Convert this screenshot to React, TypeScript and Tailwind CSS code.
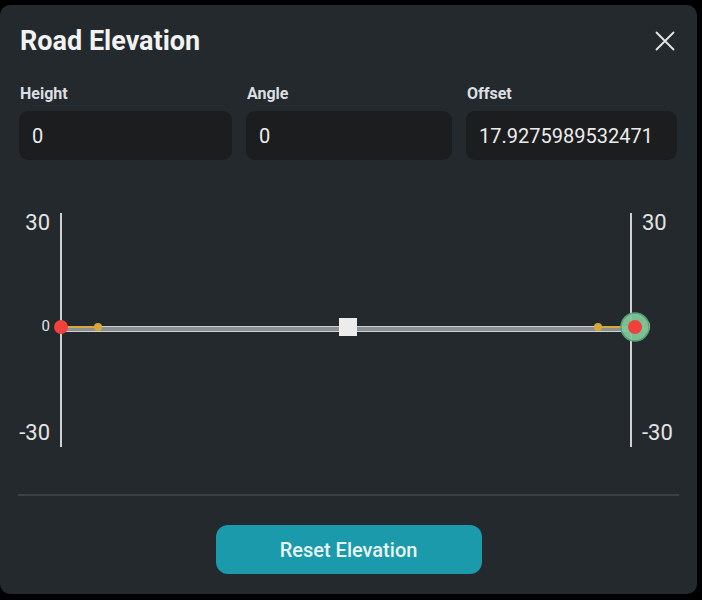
import React from "react";

function CloseIcon() {
  return (
    <svg width="20" height="20" viewBox="0 0 20 20" fill="none">
      <path d="M1.5 1.5 L18.5 18.5 M18.5 1.5 L1.5 18.5" stroke="#e6e6e6" strokeWidth="1.8" strokeLinecap="round" />
    </svg>
  );
}

function Field({ label, value, w }: { label: string; value: string; w: string }) {
  return (
    <div className={`flex flex-col ${w}`}>
      <div className="text-[16px] leading-[20px] font-bold text-[#dcdfe1] pl-[1px]">{label}</div>
      <div className="mt-[7px] h-[49px] rounded-[9px] bg-[#1c1d1e] flex items-center pl-[13px] text-[20px] text-[#ececec]">
        {value}
      </div>
    </div>
  );
}

function Chart() {
  const oy = 165;
  const y = (v: number) => v - oy;
  return (
    <svg width="697" height="325" viewBox="0 0 697 325" className="block">
      <line x1="61" y1={y(213)} x2="61" y2={y(447)} stroke="#d0d0d0" strokeWidth="2" />
      <line x1="631" y1={y(213)} x2="631" y2={y(447)} stroke="#d0d0d0" strokeWidth="2" />
      <text x="50" y={y(230)} textAnchor="end" fontSize="22" fill="#e4e4e4" fontFamily="Roboto, sans-serif">30</text>
      <text x="50" y={y(440)} textAnchor="end" fontSize="22" fill="#e4e4e4" fontFamily="Roboto, sans-serif">-30</text>
      <text x="50" y={y(331)} textAnchor="end" fontSize="15" fill="#e4e4e4" fontFamily="Roboto, sans-serif">0</text>
      <text x="642" y={y(230)} fontSize="22" fill="#e4e4e4" fontFamily="Roboto, sans-serif">30</text>
      <text x="642" y={y(440)} fontSize="22" fill="#e4e4e4" fontFamily="Roboto, sans-serif">-30</text>
      <text x="642" y={y(332)} fontSize="15" fill="#e4e4e4" fontFamily="Roboto, sans-serif">0</text>
      <rect x="61" y={y(326)} width="573" height="6" fill="#8a8f92" />
      <line x1="61" y1={y(326.5)} x2="634" y2={y(326.5)} stroke="#cfcfcf" strokeWidth="1.2" />
      <line x1="61" y1={y(331.5)} x2="634" y2={y(331.5)} stroke="#cfcfcf" strokeWidth="1.2" />
      <line x1="61" y1={y(327)} x2="98" y2={y(327)} stroke="#d8a83a" strokeWidth="2" />
      <circle cx="98" cy={y(327)} r="4" fill="#d8a83a" />
      <line x1="598" y1={y(327)} x2="634" y2={y(327)} stroke="#d8a83a" strokeWidth="2" />
      <circle cx="598" cy={y(327)} r="4" fill="#d8a83a" />
      <rect x="339" y={y(318)} width="18" height="18" fill="#ececec" />
      <circle cx="61" cy={y(327)} r="7" fill="#f0423c" />
      <circle cx="635" cy={y(327)} r="14" fill="#7ec69b" stroke="#5aa478" strokeWidth="1.5" opacity="0.95" />
      <circle cx="635" cy={y(327)} r="7" fill="#f0423c" />
    </svg>
  );
}

export default function App() {
  return (
    <div className="w-[702px] h-[600px] bg-black overflow-hidden" style={{ fontFamily: "Roboto, 'Noto Sans', sans-serif" }}>
      <div className="mt-[5px] w-[697px] h-[589px] rounded-[10px] bg-[#23292d] flex flex-col">
        <div className="flex items-center justify-between pl-[20px] pr-[22px] pt-[20px] h-[52px]">
          <div className="text-[27px] leading-[32px] font-bold text-[#f2f2f2]">Road Elevation</div>
          <CloseIcon />
        </div>
        <div className="flex gap-[14px] pl-[19px] pr-[20px] mt-[27px]">
          <Field label="Height" value="0" w="w-[213px]" />
          <Field label="Angle" value="0" w="w-[206px]" />
          <Field label="Offset" value="17.9275989532471" w="w-[211px]" />
        </div>
        <div className="mt-[5px]">
          <Chart />
        </div>
        <div className="mx-[18px] mt-[4px] h-[2px] bg-[#394146]" />
        <div className="flex justify-center mt-[29px]">
          <button className="w-[266px] h-[49px] rounded-[12px] bg-[#1a9aab] text-[20px] font-medium text-[#e9f4f5]">
            Reset Elevation
          </button>
        </div>
      </div>
    </div>
  );
}
